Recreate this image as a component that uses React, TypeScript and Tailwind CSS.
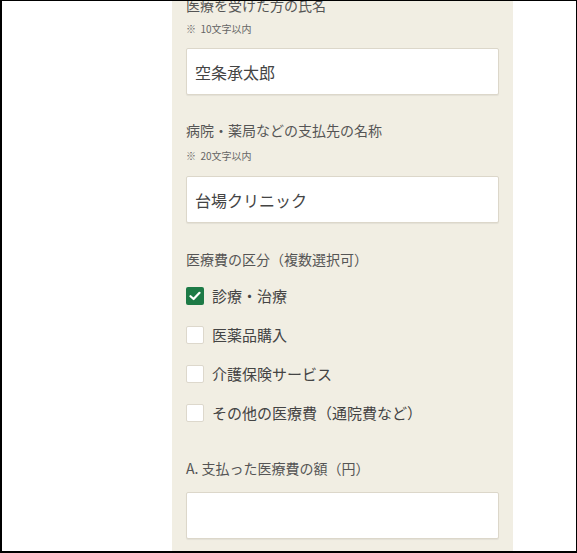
import React from "react";

const font = { fontFamily: '"Noto Sans CJK JP", "Noto Sans", sans-serif' };

function Check({ checked, label }: { checked?: boolean; label: string }) {
  return (
    <div className="flex items-center h-[39px] gap-[8px]">
      {checked ? (
        <div className="w-[18px] h-[18px] rounded-[2px] bg-[#1d7a46] flex items-center justify-center">
          <svg width="12" height="10" viewBox="0 0 12 10">
            <path d="M1.5 5.2 L4.6 8 L10.5 1.8" fill="none" stroke="#fff" strokeWidth="2.2" strokeLinecap="round" strokeLinejoin="round" />
          </svg>
        </div>
      ) : (
        <div className="w-[18px] h-[18px] rounded-[2px] bg-white border border-[#ddd8cc]" />
      )}
      <span className="text-[15px] leading-[20px] text-[#444]">{label}</span>
    </div>
  );
}

function Input({ value }: { value?: string }) {
  return (
    <div className="h-[47px] bg-white border border-[#dcd7ca] rounded-[2px] shadow-[0_1px_1px_rgba(0,0,0,0.06)] flex items-center px-[8px]">
      <span className="text-[16px] text-[#444]">{value}</span>
    </div>
  );
}

export default function App() {
  return (
    <div className="w-[577px] h-[553px] overflow-hidden bg-white border-black border-l-2 border-t border-r border-b-2" style={font}>
      <div className="ml-[170px] w-[341px] h-full bg-[#f1eee3] px-[14px] flex flex-col">
        <div className="mt-[-6px] h-[20px] text-[14px] leading-[20px] text-[#555]">医療を受けた方の氏名</div>
        <div className="mt-[7px] h-[14px] text-[10px] leading-[14px] text-[#666]">※&nbsp; 10文字以内</div>
        <div className="mt-[12px]"><Input value="空条承太郎" /></div>
        <div className="mt-[25px] h-[20px] text-[14px] leading-[20px] text-[#555]">病院・薬局などの支払先の名称</div>
        <div className="mt-[9px] h-[14px] text-[10px] leading-[14px] text-[#666]">※&nbsp; 20文字以内</div>
        <div className="mt-[13px]"><Input value="台場クリニック" /></div>
        <div className="mt-[26px] h-[20px] text-[14px] leading-[20px] text-[#555]">医療費の区分（複数選択可）</div>
        <div className="mt-[7px] flex flex-col">
          <Check checked label="診療・治療" />
          <Check label="医薬品購入" />
          <Check label="介護保険サービス" />
          <Check label="その他の医療費（通院費など）" />
        </div>
        <div className="mt-[26px] h-[20px] text-[14px] leading-[20px] text-[#555]">A. 支払った医療費の額（円）</div>
        <div className="mt-[14px]"><Input /></div>
      </div>
    </div>
  );
}
